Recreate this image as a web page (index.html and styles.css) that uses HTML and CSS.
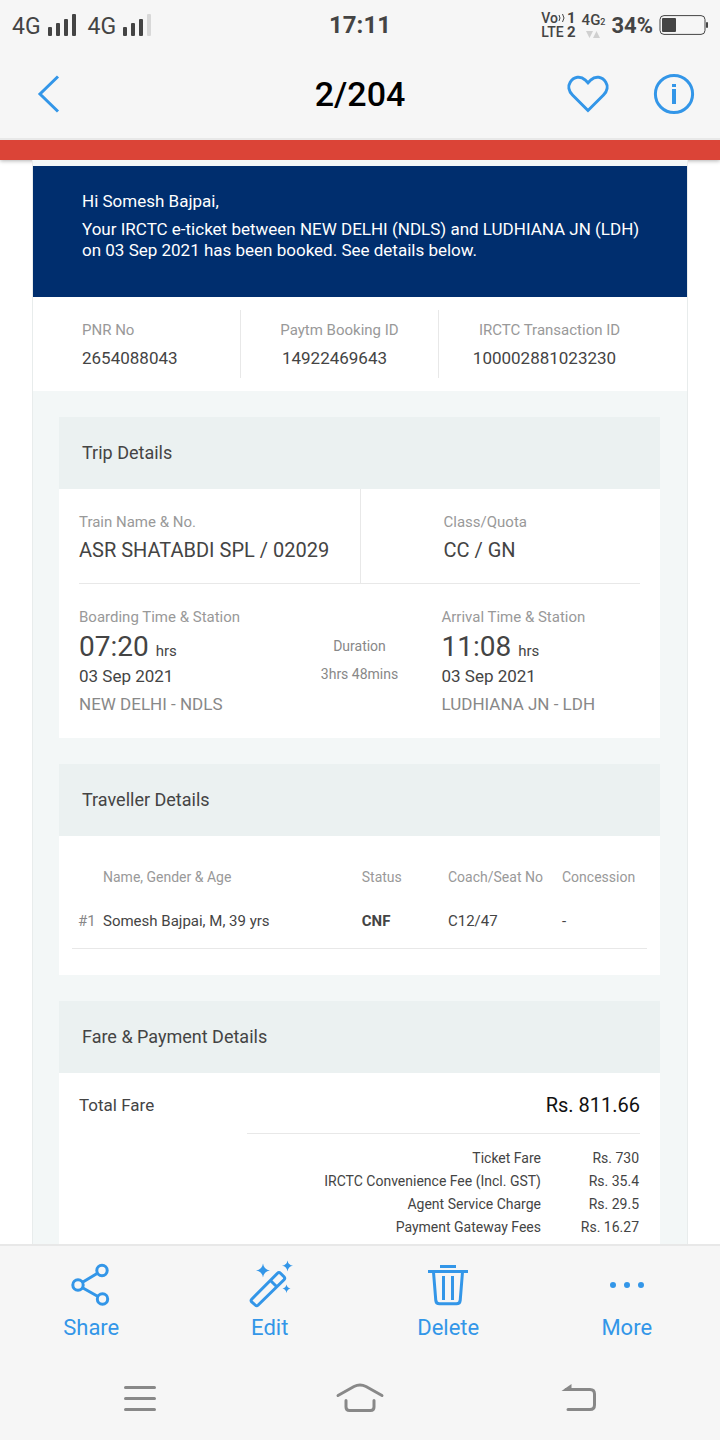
FILE: index.html
```html
<!DOCTYPE html>
<html lang="en">
    <head>
        <meta charset="utf-8">
        <meta name="viewport" content="width=device-width, initial-scale=1">
        <title>2/204</title>
        <link rel="stylesheet" href="styles.css">
    </head>
    <body>
		<div class="status_bar">
			<div class="status_left">
				<span class="net">4G</span>
				<svg class="signal" width="28" height="22" viewBox="0 0 28 22">
					<rect x="0" y="13" width="4" height="9" rx="1"/>
					<rect x="8" y="9" width="4" height="13" rx="1"/>
					<rect x="16" y="5" width="4" height="17" rx="1"/>
					<rect x="24" y="0" width="4" height="22" rx="1"/>
				</svg>
				<span class="net">4G</span>
				<svg class="signal" width="28" height="22" viewBox="0 0 28 22">
					<rect x="0" y="13" width="4" height="9" rx="1"/>
					<rect x="8" y="9" width="4" height="13" rx="1"/>
					<rect x="16" y="5" width="4" height="17" rx="1"/>
					<rect class="signal_off" x="24" y="0" width="4" height="22" rx="1"/>
				</svg>
			</div>
			<div class="clock">17:11</div>
			<div class="status_right">
				<div class="volte">
					<div>Vo<svg width="8" height="12" viewBox="0 0 8 12"><path d="M1 3Q3 6 1 9M4.500 2Q7.500 6 4.500 10" /></svg><b>1</b></div>
					<div>LTE<b>2</b></div>
				</div>
				<div class="data">
					<div>4G<small>2</small></div>
					<svg width="14" height="7" viewBox="0 0 14 7"><path d="M0 0h7L3.500 7zM7 7h7L10.500 0z"/></svg>
				</div>
				<span class="percent">34%</span>
				<svg class="battery" width="50" height="20" viewBox="0 0 50 20">
					<rect class="battery_case" x="1" y=".6" width="45" height="18.800" rx="4"/>
					<rect x="3" y="3" width="14" height="14" rx="1"/>
					<rect x="47" y="7" width="2" height="6" rx="1"/>
				</svg>
			</div>
		</div>

		<header class="top_bar">
			<button class="icon_btn back" aria-label="Back">
				<svg width="22" height="38" viewBox="0 0 22 38"><path d="M21 1.500L3 19l18 17.500"/></svg>
			</button>
			<h1>2/204</h1>
			<div class="top_actions">
				<button class="icon_btn" aria-label="Favourite">
					<svg width="42" height="38" viewBox="0 0 42 38"><path d="M21 35.500L5.500 20C1.500 16 .8 11 3.200 7.200 6.800 1.500 13.500.6 18 4.800L21 7.800 24 4.800C28.500.6 35.200 1.500 38.800 7.200 41.200 11 40.500 16 36.500 20z"/></svg>
				</button>
				<button class="icon_btn" aria-label="Info">
					<svg width="40" height="40" viewBox="0 0 40 40">
						<circle cx="20" cy="20" r="18.600"/>
						<path class="solid" d="M18 10h4v3h-4zM18 15h4v15h-4z"/>
					</svg>
				</button>
			</div>
		</header>

		<main class="photo">
			<div class="red_bar"></div>
			<div class="ticket">
				<div class="intro">
					<p>Hi Somesh Bajpai,</p>
					<p>Your IRCTC e-ticket between NEW DELHI (NDLS) and LUDHIANA JN (LDH) on 03 Sep 2021 has been booked. See details below.</p>
				</div>
				<div class="refs">
					<div class="ref">
						<div class="label">PNR No</div>
						<div class="value">2654088043</div>
					</div>
					<div class="ref">
						<div class="label">Paytm Booking ID</div>
						<div class="value">14922469643</div>
					</div>
					<div class="ref">
						<div class="label">IRCTC Transaction ID</div>
						<div class="value">100002881023230</div>
					</div>
				</div>

				<section class="card">
					<h2>Trip Details</h2>
					<div class="trip">
						<div class="train">
							<div class="train_name">
								<div class="label">Train Name &amp; No.</div>
								<div class="big">ASR SHATABDI SPL / 02029</div>
							</div>
							<div class="train_class">
								<div class="label">Class/Quota</div>
								<div class="big">CC / GN</div>
							</div>
						</div>
						<div class="times">
							<div>
								<div class="label">Boarding Time &amp; Station</div>
								<div class="time">07:20 <small>hrs</small></div>
								<div class="value">03 Sep 2021</div>
								<div class="station">NEW DELHI - NDLS</div>
							</div>
							<div class="duration">
								<div>Duration</div>
								<div>3hrs 48mins</div>
							</div>
							<div>
								<div class="label">Arrival Time &amp; Station</div>
								<div class="time">11:08 <small>hrs</small></div>
								<div class="value">03 Sep 2021</div>
								<div class="station">LUDHIANA JN - LDH</div>
							</div>
						</div>
					</div>
				</section>

				<section class="card">
					<h2>Traveller Details</h2>
					<div class="travellers">
						<table>
							<thead>
								<tr>
									<th class="col_no"></th>
									<th class="col_name">Name, Gender &amp; Age</th>
									<th class="col_status">Status</th>
									<th class="col_seat">Coach/Seat No</th>
									<th>Concession</th>
								</tr>
							</thead>
							<tbody>
								<tr>
									<td class="no">#1</td>
									<td>Somesh Bajpai, M, 39 yrs</td>
									<td><b>CNF</b></td>
									<td>C12/47</td>
									<td>-</td>
								</tr>
							</tbody>
						</table>
					</div>
				</section>

				<section class="card">
					<h2>Fare &amp; Payment Details</h2>
					<div class="fare">
						<div class="total">
							<span>Total Fare</span>
							<span class="total_sum">Rs. 811.66</span>
						</div>
						<table class="fees">
							<tr><th>Ticket Fare</th><td>Rs. 730</td></tr>
							<tr><th>IRCTC Convenience Fee (Incl. GST)</th><td>Rs. 35.4</td></tr>
							<tr><th>Agent Service Charge</th><td>Rs. 29.5</td></tr>
							<tr><th>Payment Gateway Fees</th><td>Rs. 16.27</td></tr>
						</table>
					</div>
				</section>
			</div>
		</main>

		<footer class="tool_bar">
			<button class="tool">
				<svg width="44" height="48" viewBox="0 0 44 48">
					<circle cx="9" cy="25" r="5.200"/><circle cx="33" cy="10.500" r="5.200"/><circle cx="33.500" cy="39" r="5.200"/>
					<path d="M13.500 22.300L28.500 13.200M13.500 27.700L29 36.500"/>
				</svg>
				<span>Share</span>
			</button>
			<button class="tool">
				<svg width="44" height="48" viewBox="0 0 44 48">
					<path d="M3.700 39.300L29.500 13.200Q31 11.700 32.500 13.200L36 16.700Q37.400 18.200 36 19.700L10.200 45Q8.700 46.400 7.200 45L3.700 41.900Q2.500 40.600 3.700 39.300zM22.500 20.500L28.500 26.500"/>
					<path class="solid" d="M15 3.500Q15.800 9.500 22 10.500 15.800 11.500 15 17.500 14.200 11.500 8 10.500 14.200 9.500 15 3.500zM39.500 .5Q40.200 5 45 5.800 40.200 6.500 39.500 11.500 38.800 6.500 34 5.800 38.800 5 39.500 .5zM38.500 24.500Q39.200 28 42.500 28.600 39.200 29.200 38.500 33 37.800 29.200 34.500 28.600 37.800 28 38.500 24.500z"/>
				</svg>
				<span>Edit</span>
			</button>
			<button class="tool">
				<svg width="44" height="48" viewBox="0 0 44 48">
					<path d="M14 6.400H30M2 11.500H42M7.500 12L9.800 40.500Q10.200 43.800 13.500 43.800H30.500Q33.800 43.800 34.200 40.500L36.500 12M17.500 16V40M26.500 16V40"/>
				</svg>
				<span>Delete</span>
			</button>
			<button class="tool">
				<svg width="44" height="48" viewBox="0 0 44 48">
					<path class="solid" d="M5 25a3 3 0 1 0 6 0a3 3 0 1 0-6 0M19 25a3 3 0 1 0 6 0a3 3 0 1 0-6 0M33 25a3 3 0 1 0 6 0a3 3 0 1 0-6 0"/>
				</svg>
				<span>More</span>
			</button>
		</footer>

		<nav class="system_bar">
			<button class="icon_btn" aria-label="Recent apps">
				<svg width="48" height="32" viewBox="0 0 48 32"><path d="M9.500 4.500H38.500M9.500 15.500H38.500M9.500 26.500H38.500"/></svg>
			</button>
			<button class="icon_btn" aria-label="Home">
				<svg width="48" height="32" viewBox="0 0 48 32"><path d="M2 12.500L18 3.500Q24 .5 30 3.500L46 12.500M10 17.500V24Q10 27.500 13.500 27.500H34.500Q38 27.500 38 24V17.500"/></svg>
			</button>
			<button class="icon_btn" aria-label="Return">
				<svg width="48" height="32" viewBox="0 0 48 32">
					<path d="M10 6.500H34Q38.500 6.500 38.500 11V22Q38.500 26.500 34 26.500H12"/>
					<path class="solid" d="M5.500 8L15.500 1V8z"/>
				</svg>
			</button>
		</nav>
    </body>
</html>
```
FILE: styles.css
```css
*{
	box-sizing: border-box;
}
body{
	margin: 0;
	height: 100vh;
	display: flex;
	flex-direction: column;
	background-color: #f6f6f6;
	color: #444;
	font-family: Roboto, sans-serif;
}
h1, h2, p{
	margin: 0;
	font-weight: 400;
}
button{
	padding: 0;
	border: 0;
	background: none;
	font-family: inherit;
}
svg{
	display: block;
	overflow: visible;
}
table{
	border-collapse: collapse;
}
th, td{
	padding: 0;
	text-align: left;
	font-weight: 400;
}

/* status bar */
.status_bar{
	height: 50px;
	padding: 0 12px;
	display: grid;
	grid-template-columns: 1fr auto 1fr;
	align-items: center;
	color: #444;
	fill: #444;
}
.status_left{
	display: flex;
	align-items: center;
	gap: 7px;
}
.net{
	font-size: 23px;
	line-height: 28px;
	padding-top: 4px;
}
.signal + .net{
	margin-left: 5px;
}
.signal_off{
	fill: #d8d8d8;
}
.clock{
	font-size: 24px;
	font-weight: 700;
}
.status_right{
	display: flex;
	align-items: center;
	justify-content: flex-end;
	gap: 6px;
}
.volte{
	font-size: 14px;
	line-height: 14px;
	font-weight: 500;
}
.volte div{
	display: flex;
	align-items: center;
	justify-content: space-between;
}
.volte svg{
	fill: none;
	stroke: #444;
	margin-right: 1px;
}
.volte b{
	font-size: 15px;
}
.data{
	font-size: 15px;
	line-height: 14px;
	font-weight: 500;
}
.data small{
	font-size: 9px;
}
.data svg{
	margin: 2px 0 0 4px;
	fill: #d0d0d0;
}
.percent{
	font-size: 22px;
	font-weight: 700;
}
.battery{
	margin-right: -1px;
}
.battery_case{
	fill: none;
	stroke: #444;
}

/* title bar */
.top_bar{
	height: 90px;
	padding: 0 26px 0 37px;
	display: grid;
	grid-template-columns: 1fr auto 1fr;
	align-items: center;
	border-bottom: 2px solid #e8e8e8;
}
.top_bar h1{
	padding-right: 11px;
	color: #000;
	font-size: 34px;
	font-weight: 500;
}
.top_bar svg, .tool svg{
	fill: none;
	stroke: #3396e8;
	stroke-width: 3;
}
.top_bar .solid, .tool .solid{
	fill: #3396e8;
	stroke: none;
}
.back{
	justify-self: start;
}
.top_actions{
	display: flex;
	align-items: center;
	justify-content: flex-end;
	gap: 45px;
}

/* the photo itself, cut off by the tool bar */
.photo{
	flex: 1;
	min-height: 0;
	overflow: hidden;
	background-color: #fff;
}
.red_bar{
	height: 20px;
	background-color: #db4437;
	box-shadow: 0 1px 4px rgba(0, 0, 0, .3);
}
.ticket{
	margin: 0 32px;
	padding-top: 6px;
	border: 1px solid #e8ecec;
	border-width: 0 1px;
	background-color: #f3f7f7;
}
.intro{
	padding: 25px 40px 36px 49px;
	background-color: #002e6e;
	color: #fff;
	font-size: 17px;
	line-height: 21px;
}
.intro p + p{
	margin-top: 7px;
}
.label{
	color: #999;
	font-size: 15px;
	line-height: 28px;
}
.value{
	font-size: 17px;
	line-height: 28px;
}
.refs{
	padding: 13px 27px 13px 49px;
	display: grid;
	grid-template-columns: 158px 198px 1fr;
	background-color: #fff;
}
.ref{
	padding: 6px 0;
}
.ref + .ref{
	border-left: 1px solid #e8e8e8;
	text-align: center;
}
.ref + .ref .value{
	padding-right: 10px;
}

/* cards */
.card{
	margin: 26px 27px 26px 26px;
	background-color: #fff;
}
.card h2{
	padding: 22px 23px;
	background-color: #ebf1f1;
	font-size: 18px;
	line-height: 28px;
}
.trip{
	padding: 0 20px 20px;
}
.train{
	display: grid;
	grid-template-columns: 1fr 1fr;
	border-bottom: 1px solid #e8e8e8;
}
.train_name, .train_class{
	padding: 19px 0;
}
.train_class{
	padding-left: 83px;
	border-left: 1px solid #e8e8e8;
}
.big{
	font-size: 20px;
	line-height: 28px;
}
.times{
	padding-top: 19px;
	display: grid;
	grid-template-columns: 1fr 164px 1fr;
}
.time{
	font-size: 28px;
	line-height: 31px;
}
.time small{
	font-size: 15px;
	line-height: 15px;
}
.station{
	color: #888;
	font-size: 17px;
	line-height: 28px;
	white-space: nowrap;
}
.duration{
	padding-top: 29px;
	color: #888;
	font-size: 14px;
	line-height: 28px;
	text-align: center;
}
.travellers{
	padding: 19px 13px 26px;
}
.travellers table{
	width: 100%;
	table-layout: fixed;
	border-bottom: 1px solid #e8e8e8;
}
.travellers th{
	height: 44px;
	color: #999;
	font-size: 14px;
}
.travellers td{
	height: 44px;
	font-size: 15px;
}
.travellers tbody::after{
	content: "";
	display: block;
	height: 5px;
}
.travellers .no{
	padding-left: 6px;
	color: #888;
}
.col_no{
	width: 31px;
}
.col_name{
	width: 45%;
}
.col_status{
	width: 15%;
}
.col_seat{
	width: 114px;
}
.fare{
	padding: 0 20px 40px;
}
.total{
	display: flex;
	align-items: center;
	justify-content: space-between;
	height: 60px;
	padding-top: 4px;
	font-size: 17px;
}
.total_sum{
	color: #111;
	font-size: 20px;
}
.fees{
	width: 70%;
	margin-left: auto;
	border-top: 1px solid #e8e8e8;
	border-collapse: separate;
	border-spacing: 0;
	padding-top: 13px;
	font-size: 14px;
	line-height: 23px;
}
.fees th, .fees td{
	text-align: right;
}
.fees td{
	width: 99px;
	padding-right: 1px;
}

/* bottom bars */
.tool_bar{
	height: 112px;
	padding: 14px 4px 0 2px;
	display: grid;
	grid-template-columns: repeat(4, 1fr);
	border-top: 2px solid #e8e8e8;
}
.tool{
	display: flex;
	flex-direction: column;
	align-items: center;
	gap: 7px;
	color: #3396e8;
	font-size: 22px;
	line-height: 26px;
}
.system_bar{
	height: 84px;
	padding: 2px 30px 0;
	display: grid;
	grid-template-columns: repeat(3, 1fr);
	align-items: center;
	justify-items: center;
}
.system_bar svg{
	fill: none;
	stroke: #888;
	stroke-width: 3;
	stroke-linecap: round;
}
.system_bar .solid{
	fill: #888;
	stroke: none;
}
```
